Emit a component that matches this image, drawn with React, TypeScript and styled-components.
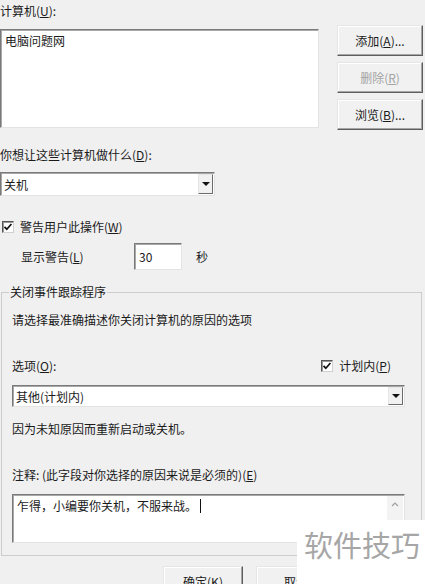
import { createGlobalStyle } from "styled-components";
import styled from "styled-components";

const GlobalStyle = createGlobalStyle`
  html, body {
    margin: 0;
    padding: 0;
    background: #f0f0f0;
  }
  body {
    font-family: "Noto Sans CJK SC", "Noto Sans", sans-serif;
    font-size: 12px;
    color: #1a1a1a;
  }
`;

const Page = styled.div`
  position: relative;
  width: 425px;
  height: 584px;
  overflow: hidden;
  background: #f0f0f0;
`;

const Label = styled.div<{ $top: number; $left?: number }>`
  margin-top: ${({ $top }) => $top}px;
  padding-left: ${({ $left }) => $left ?? 0}px;
  line-height: 16px;
  white-space: nowrap;
`;

const Key = styled.span`
  text-decoration: underline;
  text-underline-offset: 1px;
`;

const TopRow = styled.div`
  display: flex;
  align-items: flex-start;
  gap: 18px;
  margin-top: 6px;
`;

const ListBox = styled.div`
  box-sizing: border-box;
  width: 319px;
  height: 99px;
  margin-top: 4px;
  padding: 3px 4px;
  background: #fff;
  border: 1px solid;
  border-color: #7a7a7a #e3e3e3 #e3e3e3 #7a7a7a;
  box-shadow: inset 1px 1px #a8a8a8;
  line-height: 16px;
`;

const ButtonColumn = styled.div`
  display: flex;
  flex-direction: column;
  gap: 6px;
  width: 86px;
`;

const Button = styled.button<{ $width?: number }>`
  box-sizing: border-box;
  width: ${({ $width }) => ($width ? `${$width}px` : "100%")};
  height: 31px;
  padding: 0;
  background: #f1f1f1;
  border: 1px solid;
  border-color: #e6e6e6 #5e5e5e #5e5e5e #e6e6e6;
  box-shadow: inset -1px -1px #a6a6a6, inset 1px 1px #fff;
  font-family: inherit;
  font-size: 12px;
  color: ${({ disabled }) => (disabled ? "#a3a3a3" : "#1a1a1a")};
`;

const Combo = styled.div<{ $width?: number; $height: number; $top: number }>`
  box-sizing: border-box;
  display: flex;
  align-items: stretch;
  width: ${({ $width }) => ($width ? `${$width}px` : "100%")};
  height: ${({ $height }) => $height}px;
  margin-top: ${({ $top }) => $top}px;
  background: #fff;
  border: 1px solid;
  border-color: #7a7a7a #e3e3e3 #e3e3e3 #7a7a7a;
  box-shadow: inset 1px 1px #a8a8a8;
`;

const ComboText = styled.div`
  flex: 1;
  display: flex;
  align-items: center;
  padding-left: 3px;
`;

const ComboArrow = styled.div`
  box-sizing: border-box;
  width: 15px;
  margin: 1px 1px 1px 0;
  display: flex;
  align-items: center;
  justify-content: center;
  background: #f1f1f1;
  border: 1px solid;
  border-color: #e6e6e6 #6a6a6a #6a6a6a #e6e6e6;
`;

const Triangle = styled.div`
  width: 0;
  height: 0;
  border-left: 4px solid transparent;
  border-right: 4px solid transparent;
  border-top: 4px solid #111;
`;

const CheckRow = styled.label<{ $top?: number; $left?: number }>`
  display: flex;
  align-items: center;
  gap: 6px;
  margin-top: ${({ $top }) => $top ?? 0}px;
  padding-left: ${({ $left }) => $left ?? 0}px;
  line-height: 16px;
`;

const CheckBox = styled.span`
  box-sizing: border-box;
  display: inline-flex;
  width: 12px;
  height: 12px;
  background: #fff;
  border: 1px solid;
  border-color: #555 #d0d0d0 #d0d0d0 #555;
  box-shadow: inset 1px 1px #999;
`;

const WarnRow = styled.div`
  display: flex;
  align-items: center;
  height: 27px;
  margin-top: 8px;
  padding-left: 21px;
`;

const WarnLabel = styled.span`
  width: 113px;
`;

const NumberField = styled.div`
  box-sizing: border-box;
  width: 48px;
  height: 27px;
  display: flex;
  align-items: center;
  padding-left: 4px;
  background: #fff;
  border: 1px solid;
  border-color: #7a7a7a #e3e3e3 #e3e3e3 #7a7a7a;
  box-shadow: inset 1px 1px #a8a8a8;
`;

const Unit = styled.span`
  margin-left: 14px;
`;

const Group = styled.fieldset`
  box-sizing: border-box;
  width: 421px;
  margin: 14px 0 0 1px;
  padding: 0 16px 12px 10px;
  border: 1px solid #cdcdcd;
  border-radius: 0;
`;

const Legend = styled.legend`
  margin-left: -3px;
  padding: 0 1px;
  line-height: 16px;
`;

const OptionRow = styled.div`
  display: flex;
  align-items: center;
  justify-content: space-between;
  margin-top: 30px;
  padding-right: 14px;
  line-height: 16px;
`;

const NoteBox = styled.div`
  box-sizing: border-box;
  display: flex;
  height: 49px;
  margin-top: 11px;
  background: #fff;
  border: 1px solid;
  border-color: #7a7a7a #e3e3e3 #e3e3e3 #7a7a7a;
  box-shadow: inset 1px 1px #a8a8a8;
`;

const NoteText = styled.div`
  flex: 1;
  padding: 3px 4px;
  line-height: 16px;
`;

const Caret = styled.span`
  display: inline-block;
  width: 1px;
  height: 14px;
  margin-left: 3px;
  vertical-align: -2px;
  background: #111;
`;

const ScrollTrack = styled.div`
  width: 16px;
  margin: 1px 1px 1px 0;
  display: flex;
  justify-content: center;
  padding-top: 6px;
  background: #f3f3f3;
`;

const FooterRow = styled.div`
  display: flex;
  justify-content: flex-end;
  gap: 13px;
  margin-top: 10px;
  padding-right: 89px;
`;

const Watermark = styled.div`
  position: absolute;
  left: 297px;
  top: 520px;
  width: 128px;
  height: 64px;
  box-sizing: border-box;
  padding: 10px 0 0 7px;
  background: #fff;
  color: #a6a6a6;
  font-size: 29px;
  line-height: 29px;
  white-space: nowrap;
`;

function Check() {
  return (
    <CheckBox>
      <svg width="10" height="10" viewBox="0 0 10 10">
        <path d="M1.5 4.8 L3.8 7.2 L8.4 2" fill="none" stroke="#111" strokeWidth="1.7" />
      </svg>
    </CheckBox>
  );
}

function Dropdown({ text, width, height, top }: { text: string; width?: number; height: number; top: number }) {
  return (
    <Combo $width={width} $height={height} $top={top}>
      <ComboText>{text}</ComboText>
      <ComboArrow>
        <Triangle />
      </ComboArrow>
    </Combo>
  );
}

export default function App() {
  return (
    <Page>
      <GlobalStyle />
      <Label $top={3}>
        计算机(<Key>U</Key>):
      </Label>
      <TopRow>
        <ListBox>电脑问题网</ListBox>
        <ButtonColumn>
          <Button>
            添加(<Key>A</Key>)...
          </Button>
          <Button disabled>
            删除(<Key>R</Key>)
          </Button>
          <Button>
            浏览(<Key>B</Key>)...
          </Button>
        </ButtonColumn>
      </TopRow>

      <Label $top={17}>
        你想让这些计算机做什么(<Key>D</Key>):
      </Label>
      <Dropdown text="关机" width={215} height={24} top={9} />

      <CheckRow $top={23} $left={2}>
        <Check />
        <span>
          警告用户此操作(<Key>W</Key>)
        </span>
      </CheckRow>
      <WarnRow>
        <WarnLabel>
          显示警告(<Key>L</Key>)
        </WarnLabel>
        <NumberField>30</NumberField>
        <Unit>秒</Unit>
      </WarnRow>

      <Group>
        <Legend>关闭事件跟踪程序</Legend>
        <Label $top={12}>请选择最准确描述你关闭计算机的原因的选项</Label>
        <OptionRow>
          <span>
            选项(<Key>O</Key>):
          </span>
          <CheckRow>
            <Check />
            <span>
              计划内(<Key>P</Key>)
            </span>
          </CheckRow>
        </OptionRow>
        <Dropdown text="其他(计划内)" height={22} top={11} />
        <Label $top={14}>因为未知原因而重新启动或关机。</Label>
        <Label $top={30}>
          注释: (此字段对你选择的原因来说是必须的)(<Key>E</Key>)
        </Label>
        <NoteBox>
          <NoteText>
            乍得，小编要你关机，不服来战。
            <Caret />
          </NoteText>
          <ScrollTrack>
            <svg width="8" height="5" viewBox="0 0 8 5">
              <path d="M1 4 L4 1 L7 4" fill="none" stroke="#a0a0a0" strokeWidth="1.2" />
            </svg>
          </ScrollTrack>
        </NoteBox>
      </Group>

      <FooterRow>
        <Button $width={80}>
          确定(<Key>K</Key>)
        </Button>
        <Button $width={80}>取消</Button>
      </FooterRow>

      <Watermark>软件技巧</Watermark>
    </Page>
  );
}
